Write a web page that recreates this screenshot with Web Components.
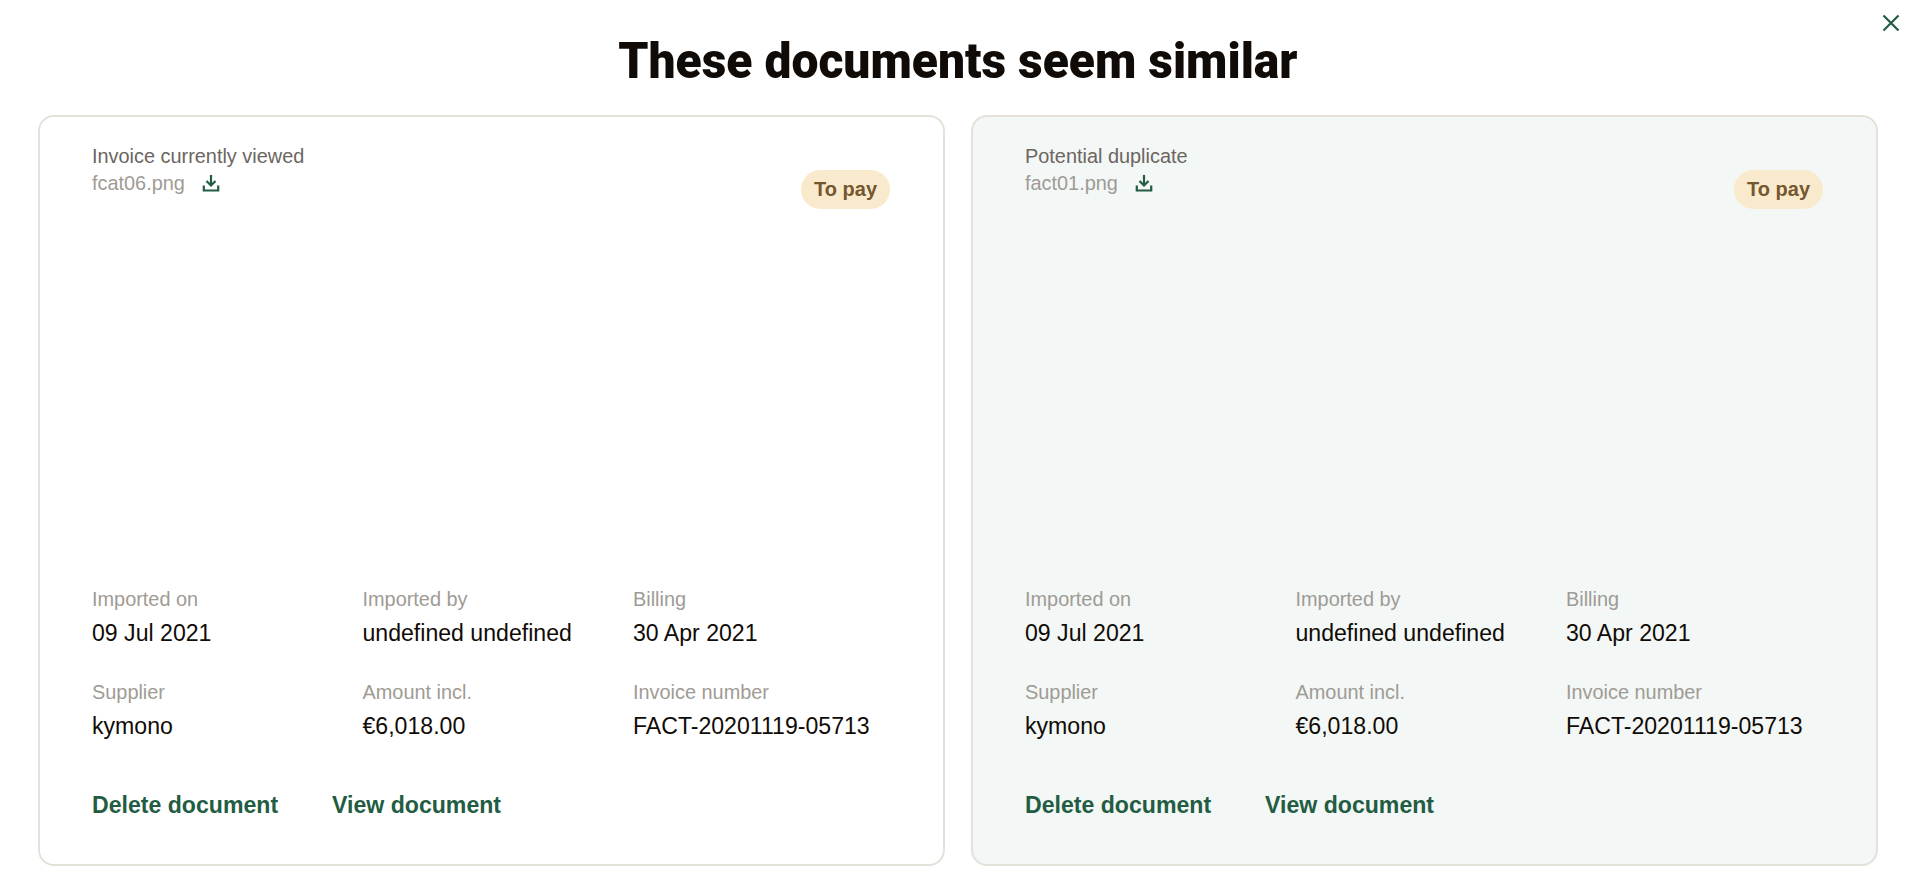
<!DOCTYPE html>
<html lang="en">
<head>
<meta charset="utf-8">
<title>These documents seem similar</title>
<style>
    html, body { margin: 0; height: 100%; background: #fff; }
    body { font-family: "Liberation Sans", Arial, sans-serif; }
</style>
</head>
<body>
<duplicate-dialog>
    <doc-card slot="left" heading="Invoice currently viewed" file="fcat06.png"
        imported="09 Jul 2021" by="undefined undefined" billing="30 Apr 2021"
        supplier="kymono" amount="€6,018.00" number="FACT-20201119-05713"></doc-card>
    <doc-card slot="right" tinted heading="Potential duplicate" file="fact01.png"
        imported="09 Jul 2021" by="undefined undefined" billing="30 Apr 2021"
        supplier="kymono" amount="€6,018.00" number="FACT-20201119-05713"></doc-card>
</duplicate-dialog>

<script>
class DocField extends HTMLElement {
    constructor () {
        super()
        this.root = this.attachShadow({mode: "open"})
    }

    connectedCallback () {
        this.root.innerHTML =
        `
        <style>
            :host { display: block; min-width: 0; }
            .label { color: #9f9b95; font-size: 19.9px; line-height: 24px; }
            .value { color: #100b06; font-size: 23.1px; line-height: 28px; margin-top: 8px; white-space: nowrap; }
        </style>
        <div class="label">${this.getAttribute("label")}</div>
        <div class="value"><slot></slot></div>
        `
    }
}

class StatusBadge extends HTMLElement {
    constructor () {
        super()
        this.root = this.attachShadow({mode: "open"})
        this.root.innerHTML =
        `
        <style>
            :host {
                display: inline-block;
                background: #faeacd;
                color: #74572f;
                font-size: 20px;
                font-weight: 700;
                line-height: 39px;
                height: 39px;
                padding: 0 13px;
                border-radius: 20px;
            }
        </style>
        <slot></slot>
        `
    }
}

class DocCard extends HTMLElement {
    constructor () {
        super()
        this.root = this.attachShadow({mode: "open"})
    }

    connectedCallback () {
        const attr = name => this.getAttribute(name)
        this.root.innerHTML =
        `
        <style>
            :host {
                display: flex;
                flex-direction: column;
                box-sizing: border-box;
                min-width: 0;
                height: 751px;
                padding: 26px 53px 45px 52px;
                border: 2px solid #e4e1d9;
                border-radius: 16px;
                background: #fff;
            }
            :host([tinted]) { background: #f3f7f5; }
            header { display: flex; justify-content: space-between; align-items: flex-start; }
            .heading { color: #6b665f; font-size: 19.9px; line-height: 26px; margin-bottom: 1px; }
            .file { display: flex; align-items: center; gap: 16px; color: #9f9b95; font-size: 19.9px; line-height: 26px; }
            .file svg { display: block; width: 20px; height: 20px; }
            status-badge { margin-top: 27px; }
            .spacer { flex: 1; }
            .grid { display: grid; grid-template-columns: repeat(3, 1fr); column-gap: 13.5px; row-gap: 32.5px; }
            .actions { display: flex; gap: 54px; margin-top: 51.5px; }
            a { color: #225c42; font-size: 23.1px; font-weight: 700; line-height: 28px; text-decoration: none; }
        </style>
        <header>
            <div>
                <div class="heading">${attr("heading")}</div>
                <div class="file">
                    ${attr("file")}
                    <svg viewBox="0 0 20 20" fill="none" stroke="#225c42" stroke-width="2.2">
                        <path d="M10 2v10M5.500 8l4.500 4.500L14.500 8M2.800 12.500v5h14.400v-5"/>
                    </svg>
                </div>
            </div>
            <status-badge>To pay</status-badge>
        </header>
        <div class="spacer"></div>
        <div class="grid">
            <doc-field label="Imported on">${attr("imported")}</doc-field>
            <doc-field label="Imported by">${attr("by")}</doc-field>
            <doc-field label="Billing">${attr("billing")}</doc-field>
            <doc-field label="Supplier">${attr("supplier")}</doc-field>
            <doc-field label="Amount incl.">${attr("amount")}</doc-field>
            <doc-field label="Invoice number">${attr("number")}</doc-field>
        </div>
        <div class="actions">
            <a href="#">Delete document</a>
            <a href="#">View document</a>
        </div>
        `
    }
}

class DuplicateDialog extends HTMLElement {
    constructor () {
        super()
        this.root = this.attachShadow({mode: "open"})
        this.root.innerHTML =
        `
        <style>
            :host {
                display: block;
                position: relative;
                box-sizing: border-box;
                height: 896px;
                padding: 0 42px 0 38px;
            }
            h1 {
                margin: 0;
                padding-top: 31px;
                height: 115px;
                box-sizing: border-box;
                text-align: center;
                color: #100b06;
                font-family: Roboto, "Liberation Sans", sans-serif;
                font-size: 50px;
                font-weight: 900;
                line-height: 60px;
            }
            h1 span { display: inline-block; transform: scaleX(.96); }
            .cards { display: grid; grid-template-columns: 1fr 1fr; gap: 26px; }
            .close { position: absolute; top: 14px; right: 20px; width: 18px; height: 18px; display: block; }
        </style>
        <svg class="close" viewBox="0 0 18 18" fill="none" stroke="#225c42" stroke-width="2.2">
            <path d="M1.500 1.500l15 15M16.500 1.500l-15 15"/>
        </svg>
        <h1><span>These documents seem similar</span></h1>
        <div class="cards">
            <slot name="left"></slot>
            <slot name="right"></slot>
        </div>
        `
    }
}

customElements.define("doc-field", DocField)
customElements.define("status-badge", StatusBadge)
customElements.define("doc-card", DocCard)
customElements.define("duplicate-dialog", DuplicateDialog)
</script>
</body>
</html>
